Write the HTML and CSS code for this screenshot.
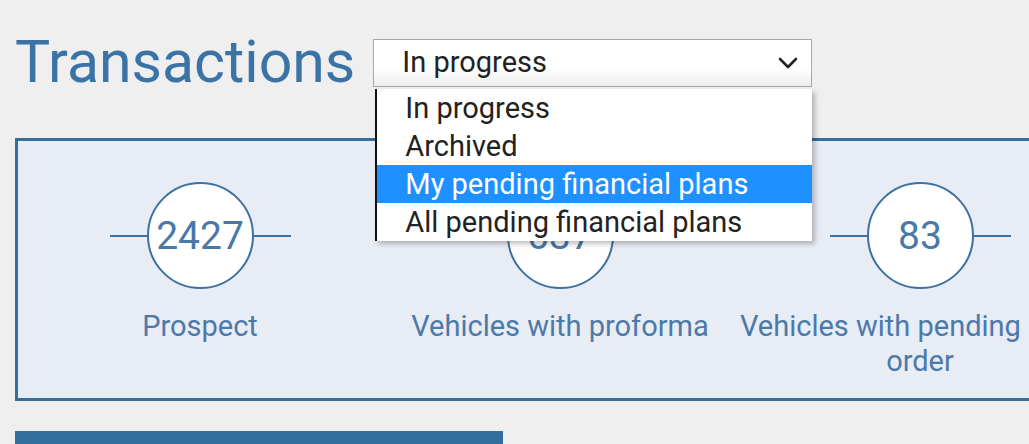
FILE: index.html
```html
<!DOCTYPE html>
<html>
<head>
<meta charset="utf-8">
<link rel="stylesheet" href="styles.css">
</head>
<body>
<div class="page">
  <header class="header">
    <h1 class="title">Transactions</h1>
    <div class="select-wrap">
      <div class="select">
        <span class="select-value">In progress</span>
        <svg class="chevron" width="20" height="12" viewBox="0 0 20 12"><path d="M2 2 L10 10 L18 2" fill="none" stroke="#222" stroke-width="2.6" stroke-linecap="round" stroke-linejoin="round"/></svg>
      </div>
      <ul class="options">
        <li class="option">In progress</li>
        <li class="option">Archived</li>
        <li class="option selected">My pending financial plans</li>
        <li class="option">All pending financial plans</li>
      </ul>
    </div>
  </header>
  <section class="panel">
    <div class="stat">
      <div class="node"><span class="line"></span><span class="circle">2427</span><span class="line"></span></div>
      <div class="label">Prospect</div>
    </div>
    <div class="stat">
      <div class="node"><span class="line"></span><span class="circle">637</span><span class="line"></span></div>
      <div class="label">Vehicles with proforma</div>
    </div>
    <div class="stat">
      <div class="node"><span class="line"></span><span class="circle">83</span><span class="line"></span></div>
      <div class="label label-full"><span class="first-line">Vehicles with pending</span> order</div>
    </div>
    <div class="stat">
      <div class="node"><span class="line"></span><span class="circle">12</span><span class="line"></span></div>
      <div class="label">Delivered</div>
    </div>
  </section>
  <div class="bar"></div>
</div>
</body>
</html>
```
FILE: styles.css
```css
html, body {
  margin: 0;
  padding: 0;
  background: #efefef;
  overflow: hidden;
  height: 100%;
}
body {
  font-family: Roboto, "Liberation Sans", sans-serif;
}
.page {
  padding: 0 0 0 15px;
  width: 1400px;
}
.header {
  display: flex;
  align-items: center;
  height: 138px;
  padding-bottom: 12px;
  box-sizing: border-box;
}
.title {
  margin: 0;
  font-weight: 400;
  font-size: 59px;
  color: #3a73a6;
  line-height: 70px;
  margin-top: -2px;
}
.select-wrap {
  position: relative;
  margin-left: 18px;
}
.select {
  width: 439px;
  height: 48px;
  box-sizing: border-box;
  border: 1px solid #a8a8a8;
  background: linear-gradient(#ffffff 60%, #eeeeee);
  display: flex;
  align-items: center;
  justify-content: space-between;
  padding: 0 13px 0 28px;
  font-size: 29px;
  color: #222;
}
.select-value {
  margin-top: -2px;
}
.chevron {
  display: block;
}
.options {
  position: absolute;
  top: 50px;
  left: 2px;
  width: 437px;
  margin: 0;
  padding: 0;
  list-style: none;
  background: #fff;
  border-left: 2px solid #111;
  box-shadow: 3px 3px 5px rgba(0,0,0,0.25);
  z-index: 5;
  box-sizing: border-box;
}
.option {
  height: 38px;
  line-height: 38px;
  padding-left: 28px;
  font-size: 29px;
  color: #222;
}
.option.selected {
  background: #1e90ff;
  color: #fff;
}
.panel {
  display: flex;
  border: 3px solid #336e9c;
  background: #e8ecf4;
  padding: 41px 0 18px 2px;
  height: 263px;
  box-sizing: border-box;
}
.stat {
  width: 360px;
  flex: none;
  display: flex;
  flex-direction: column;
  align-items: center;
  box-sizing: border-box;
}
.node {
  display: flex;
  align-items: center;
}
.line {
  width: 37px;
  height: 2px;
  background: #3c72a2;
}
.circle {
  width: 107px;
  height: 107px;
  box-sizing: border-box;
  border: 2px solid #3c72a2;
  border-radius: 50%;
  background: #fff;
  display: flex;
  align-items: center;
  justify-content: center;
  font-size: 39px;
  color: #4a78a8;
}
.label {
  margin-top: 20px;
  text-align: center;
  font-size: 29px;
  line-height: 35px;
  color: #4b7aaa;
}
.label-full {
  align-self: stretch;
}
.first-line {
  display: inline-block;
  width: 100%;
  text-align: left;
}
.bar {
  margin-top: 30px;
  width: 488px;
  height: 13px;
  background: #346e9c;
}
```
